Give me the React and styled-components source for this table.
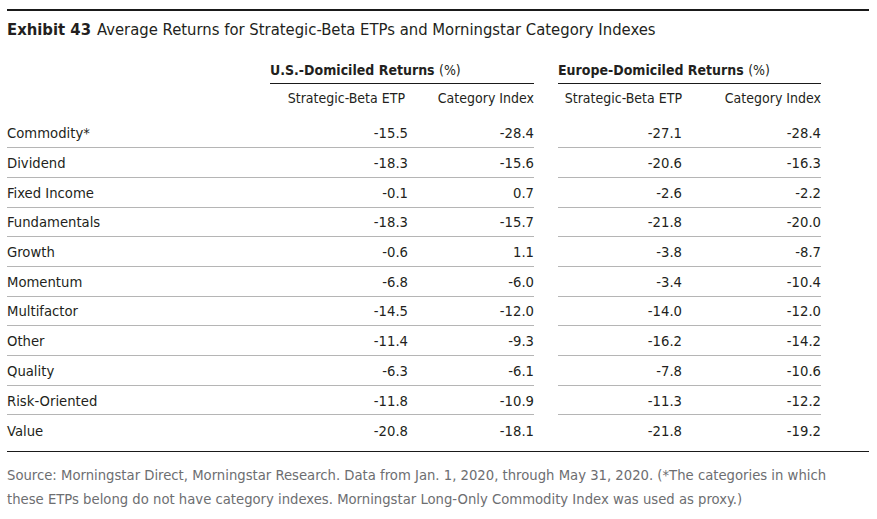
import styled, { createGlobalStyle } from 'styled-components';

const GlobalStyle = createGlobalStyle`
  html, body {
    margin: 0;
    padding: 0;
    background: #ffffff;
  }
  body {
    font-family: "DejaVu Sans Condensed", "DejaVu Sans", sans-serif;
    font-stretch: condensed;
    color: #231f20;
  }
`;

const rows = [
  ['Commodity*', '-15.5', '-28.4', '-27.1', '-28.4'],
  ['Dividend', '-18.3', '-15.6', '-20.6', '-16.3'],
  ['Fixed Income', '-0.1', '0.7', '-2.6', '-2.2'],
  ['Fundamentals', '-18.3', '-15.7', '-21.8', '-20.0'],
  ['Growth', '-0.6', '1.1', '-3.8', '-8.7'],
  ['Momentum', '-6.8', '-6.0', '-3.4', '-10.4'],
  ['Multifactor', '-14.5', '-12.0', '-14.0', '-12.0'],
  ['Other', '-11.4', '-9.3', '-16.2', '-14.2'],
  ['Quality', '-6.3', '-6.1', '-7.8', '-10.6'],
  ['Risk-Oriented', '-11.8', '-10.9', '-11.3', '-12.2'],
  ['Value', '-20.8', '-18.1', '-21.8', '-19.2'],
];

const Page = styled.div`
  width: 877px;
  height: 519px;
  padding: 9px 8px 0 7px;
  box-sizing: border-box;
  overflow: hidden;
`;

const Rule = styled.div`
  height: 1.5px;
  background: #1a1a1a;
`;

const Title = styled.h1`
  margin: 0;
  height: 38px;
  display: flex;
  align-items: center;
  gap: 6px;
  font-size: 16.5px;
  font-weight: 400;
  color: #231f20;
`;

const Exhibit = styled.span`
  font-weight: 700;
`;

const Table = styled.div`
  display: flex;
  flex-direction: column;
  margin-top: 10px;
`;

const Line = styled.div`
  display: grid;
  grid-template-columns: 527px 263px;
  column-gap: 24px;
`;

const Group = styled.div`
  display: grid;
  grid-template-columns: ${p => p.$cols};
  align-items: center;
  height: ${p => p.$h || '29.7px'};
  box-sizing: border-box;
  border-bottom: ${p => (p.$line ? `1px solid ${p.$line}` : 'none')};
`;

const GroupTitle = styled.div`
  font-size: 14px;
  font-weight: 700;
  height: 25px;
  display: flex;
  align-items: center;
  border-bottom: 1.5px solid #1a1a1a;
  box-sizing: border-box;
  padding-bottom: 2px;
`;

const Unit = styled.span`
  font-weight: 400;
`;

const Cell = styled.div`
  font-size: 14.7px;
  text-align: ${p => (p.$num ? 'right' : 'left')};
  white-space: nowrap;
`;

const SubCell = styled(Cell)`
  font-size: 14px;
  padding-right: ${p => p.$pr || '0'};
`;

const Spacer = styled.div`
  height: ${p => p.$h};
`;

const Footer = styled.div`
  margin-top: 6px;
  border-top: 1.5px solid #1a1a1a;
  padding-top: 11px;
  font-size: 14.7px;
  line-height: 24px;
  color: #6d6e71;
  white-space: nowrap;
`;

export default function App() {
  return (
    <Page>
      <GlobalStyle />
      <Rule />
      <Title>
        <Exhibit>Exhibit 43</Exhibit>
        Average Returns for Strategic-Beta ETPs and Morningstar Category Indexes
      </Title>
      <Table>
        <Line>
          <Group $cols="263px 264px" $h="auto">
            <div />
            <GroupTitle>
              U.S.-Domiciled Returns&nbsp;<Unit>(%)</Unit>
            </GroupTitle>
          </Group>
          <Group $cols="263px" $h="auto">
            <GroupTitle>
              Europe-Domiciled Returns&nbsp;<Unit>(%)</Unit>
            </GroupTitle>
          </Group>
        </Line>
        <Line>
          <Group $cols="263px 138px 126px" $h="28px">
            <div />
            <SubCell $num $pr="3px">Strategic-Beta ETP</SubCell>
            <SubCell $num>Category Index</SubCell>
          </Group>
          <Group $cols="124px 139px" $h="28px">
            <SubCell $num>Strategic-Beta ETP</SubCell>
            <SubCell $num>Category Index</SubCell>
          </Group>
        </Line>
        <Spacer $h="7px" />
        {rows.map((r, i) => {
          const line = i < rows.length - 1 ? '#b5b5b5' : null;
          return (
            <Line key={r[0]}>
              <Group $cols="263px 138px 126px" $line={line}>
                <Cell>{r[0]}</Cell>
                <Cell $num>{r[1]}</Cell>
                <Cell $num>{r[2]}</Cell>
              </Group>
              <Group $cols="124px 139px" $line={line}>
                <Cell $num>{r[3]}</Cell>
                <Cell $num>{r[4]}</Cell>
              </Group>
            </Line>
          );
        })}
      </Table>
      <Footer>
        Source: Morningstar Direct, Morningstar Research. Data from Jan. 1, 2020, through May 31, 2020. (*The categories in which
        <br />
        these ETPs belong do not have category indexes. Morningstar Long-Only Commodity Index was used as proxy.)
      </Footer>
    </Page>
  );
}
